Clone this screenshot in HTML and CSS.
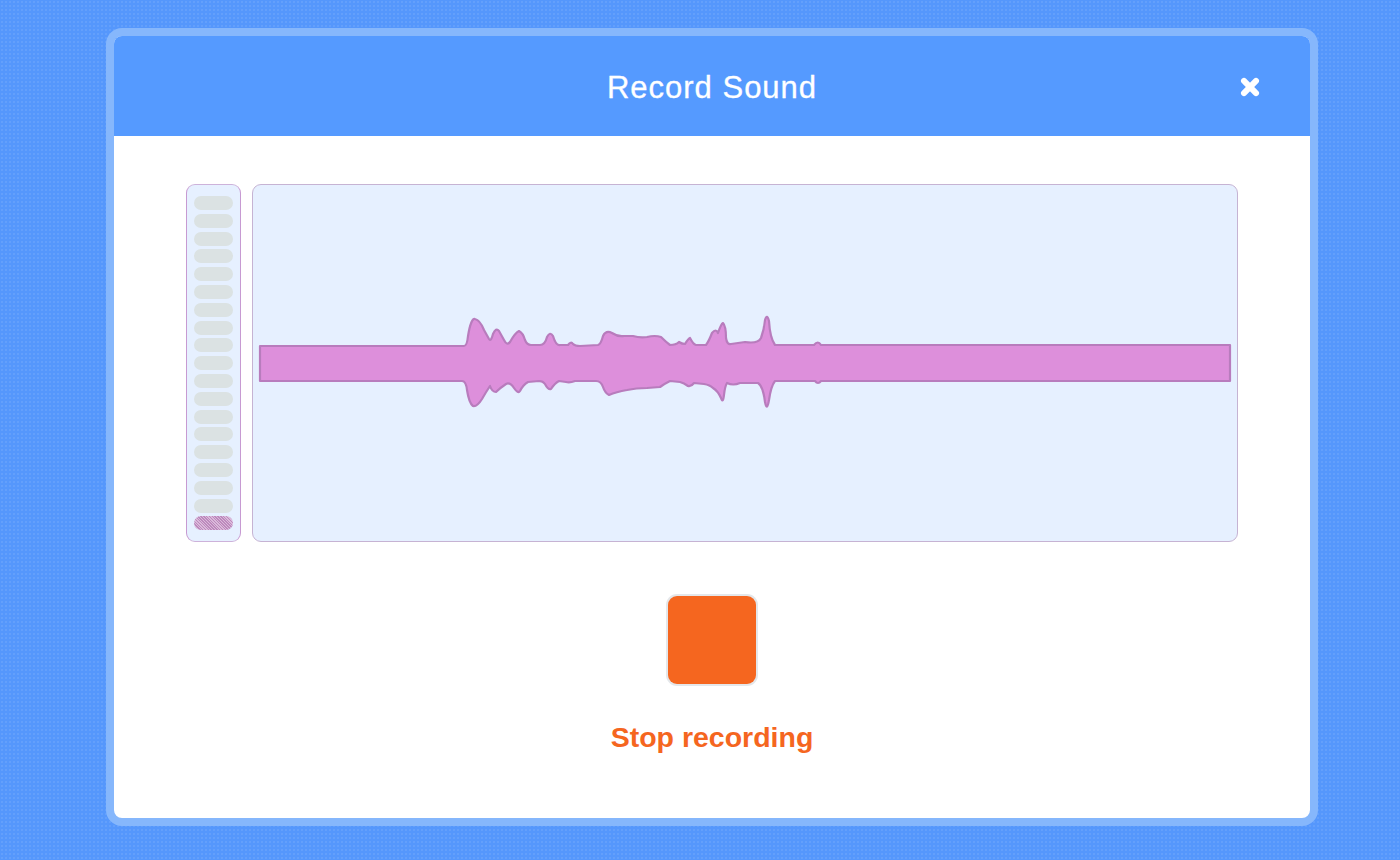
FILE: index.html
```html
<!DOCTYPE html>
<html lang="en">
<head>
<meta charset="utf-8">
<title>Record Sound</title>
<link rel="stylesheet" href="styles.css">
</head>
<body>
<div class="stage">
  <div class="modal">
    <div class="header">
      <div class="title">Record Sound</div>
      <button class="close" aria-label="Close">
        <svg width="22" height="22" viewBox="0 0 22 22">
          <g fill="#ffffff">
            <rect x="8" y="-0.5" width="6" height="23" rx="3" transform="rotate(45 11 11)"/>
            <rect x="8" y="-0.5" width="6" height="23" rx="3" transform="rotate(-45 11 11)"/>
          </g>
        </svg>
      </button>
    </div>
    <div class="body">
      <div class="visual">
        <div class="meter">
          <div class="seg"></div><div class="seg"></div><div class="seg"></div><div class="seg"></div>
          <div class="seg"></div><div class="seg"></div><div class="seg"></div><div class="seg"></div>
          <div class="seg"></div><div class="seg"></div><div class="seg"></div><div class="seg"></div>
          <div class="seg"></div><div class="seg"></div><div class="seg"></div><div class="seg"></div>
          <div class="seg"></div><div class="seg"></div>
          <div class="seg seg-on"></div>
        </div>
        <div class="wave">
          <svg class="wave-svg" width="986" height="358" viewBox="252 184 986 358">
            <path class="wave-path" d="M260 346 L464 346 Q467 346 468 336 Q471 318 475 319 Q480 320 484 330 L489 339 Q491 342 493 334 Q496 327 499 331 L504 340 Q507 346 510 342 Q515 333 519 331 Q523 333 525 340 Q527 345 531 345 L540 345 Q545 345 547 337 Q550 331 553 336 Q556 346 560 345 L568 345 Q571 341 573 344 Q575 346 580 346 L598 345 Q601 344 603 336 Q606 330 612 333 Q618 337 624 336 L633 336 Q640 338 647 337 Q655 335 661 337 Q666 342 670 345 Q676 345 679 342 Q682 344 685 344 Q688 339 690 338 Q693 344 696 345 L706 345 Q709 341 712 333 Q716 328 718 333 Q721 324 723 323 Q726 326 726 338 Q727 345 731 344 L745 342 Q758 344 761 338 Q764 330 765 320 Q767 313 769 321 Q770 338 775 345 L814 345 Q818 340 821 345 L1230 345 L1230 381 L821 381 Q818 385 815 381 L775 381 Q771 386 769 400 Q767 412 765 402 Q763 386 758 383 L740 383 Q733 386 727 383 Q725 386 724 395 Q723 404 721 398 Q718 391 713 388 Q710 385 704 384 L694 383 Q691 387 688 386 Q684 383 680 382 L670 381 Q664 384 660 387 L647 388 Q636 388 627 390 Q616 392 609 395 Q605 393 603 387 Q601 381 596 381 L575 381 Q570 383 566 382 L559 381 Q555 383 551 389 Q548 390 545 384 Q543 381 539 381 L528 382 Q523 385 520 391 Q518 394 514 388 Q510 382 506 384 Q500 388 496 392 Q492 392 490 386 Q486 392 482 399 Q477 407 473 406 Q469 403 467 390 Q466 381 462 381 L260 381 Z"/>
          </svg>
        </div>
      </div>
      <button class="record-btn" aria-label="Stop recording"></button>
      <div class="record-label">Stop recording</div>
    </div>
  </div>
</div>
</body>
</html>
```

FILE: styles.css
```css
* { box-sizing: border-box; }

html, body {
  margin: 0;
  padding: 0;
  width: 1400px;
  height: 860px;
  overflow: hidden;
}

body {
  background-color: #5597fc;
  background-image: radial-gradient(circle, rgba(140, 185, 252, 0.4) 0.6px, transparent 0.9px);
  background-size: 4px 4px;
  font-family: "Liberation Sans", Arial, Helvetica, sans-serif;
}

.stage {
  padding: 28px 0 0 106px;
}

.modal {
  width: 1212px;
  height: 798px;
  border: 8px solid #86b7fc;
  border-radius: 16px;
  background: #ffffff;
  overflow: hidden;
  display: flex;
  flex-direction: column;
}

.header {
  position: relative;
  height: 100px;
  flex: 0 0 100px;
  background: #559aff;
  display: flex;
  align-items: center;
  justify-content: center;
}

.title {
  color: #ffffff;
  font-size: 31px;
  letter-spacing: 1px;
  line-height: 1;
  padding-top: 2px;
  -webkit-text-stroke: 0.3px #ffffff;
}

.close {
  position: absolute;
  right: 49px;
  top: 40px;
  width: 22px;
  height: 22px;
  padding: 0;
  border: none;
  background: none;
  display: flex;
}

.body {
  flex: 1;
  display: flex;
  flex-direction: column;
  align-items: center;
  padding: 48px 72px 0 72px;
}

.visual {
  width: 100%;
  height: 358px;
  display: flex;
  gap: 11px;
}

.meter {
  width: 55px;
  height: 358px;
  flex: 0 0 55px;
  border: 1px solid #c79ad2;
  border-top-color: #cdb2da;
  border-bottom-color: #cdb2da;
  border-radius: 9px;
  background: #e6f0ff;
  padding: 11px 0 0 7px;
  display: flex;
  flex-direction: column;
  gap: 3.8px;
}

.seg {
  width: 39px;
  height: 14px;
  flex: 0 0 14px;
  border-radius: 7px;
  background: #dbe2e3;
}

.seg-on {
  background-color: #c9a3c9;
  background-image: repeating-linear-gradient(45deg, rgba(180, 120, 180, 0.6) 0 1px, rgba(230, 200, 230, 0.6) 1px 2px);
}

.wave {
  flex: 1;
  height: 358px;
  border: 1px solid #c6b3d3;
  border-radius: 9px;
  background: #e6f0ff;
  overflow: hidden;
}

.wave-svg {
  display: block;
  margin: -1px 0 0 -1px;
}

.wave-path {
  fill: #dd8fdb;
  stroke: #b87cbd;
  stroke-width: 2.2;
  stroke-linejoin: round;
}

.record-btn {
  margin-top: 54px;
  width: 88px;
  height: 88px;
  padding: 0;
  border: none;
  border-radius: 9px;
  background: #f5661f;
  box-shadow: 0 0 0 2px #e4e7ea;
}

.record-label {
  margin-top: 37px;
  color: #f5661f;
  font-weight: bold;
  font-size: 28.5px;
  line-height: 32px;
}
```
